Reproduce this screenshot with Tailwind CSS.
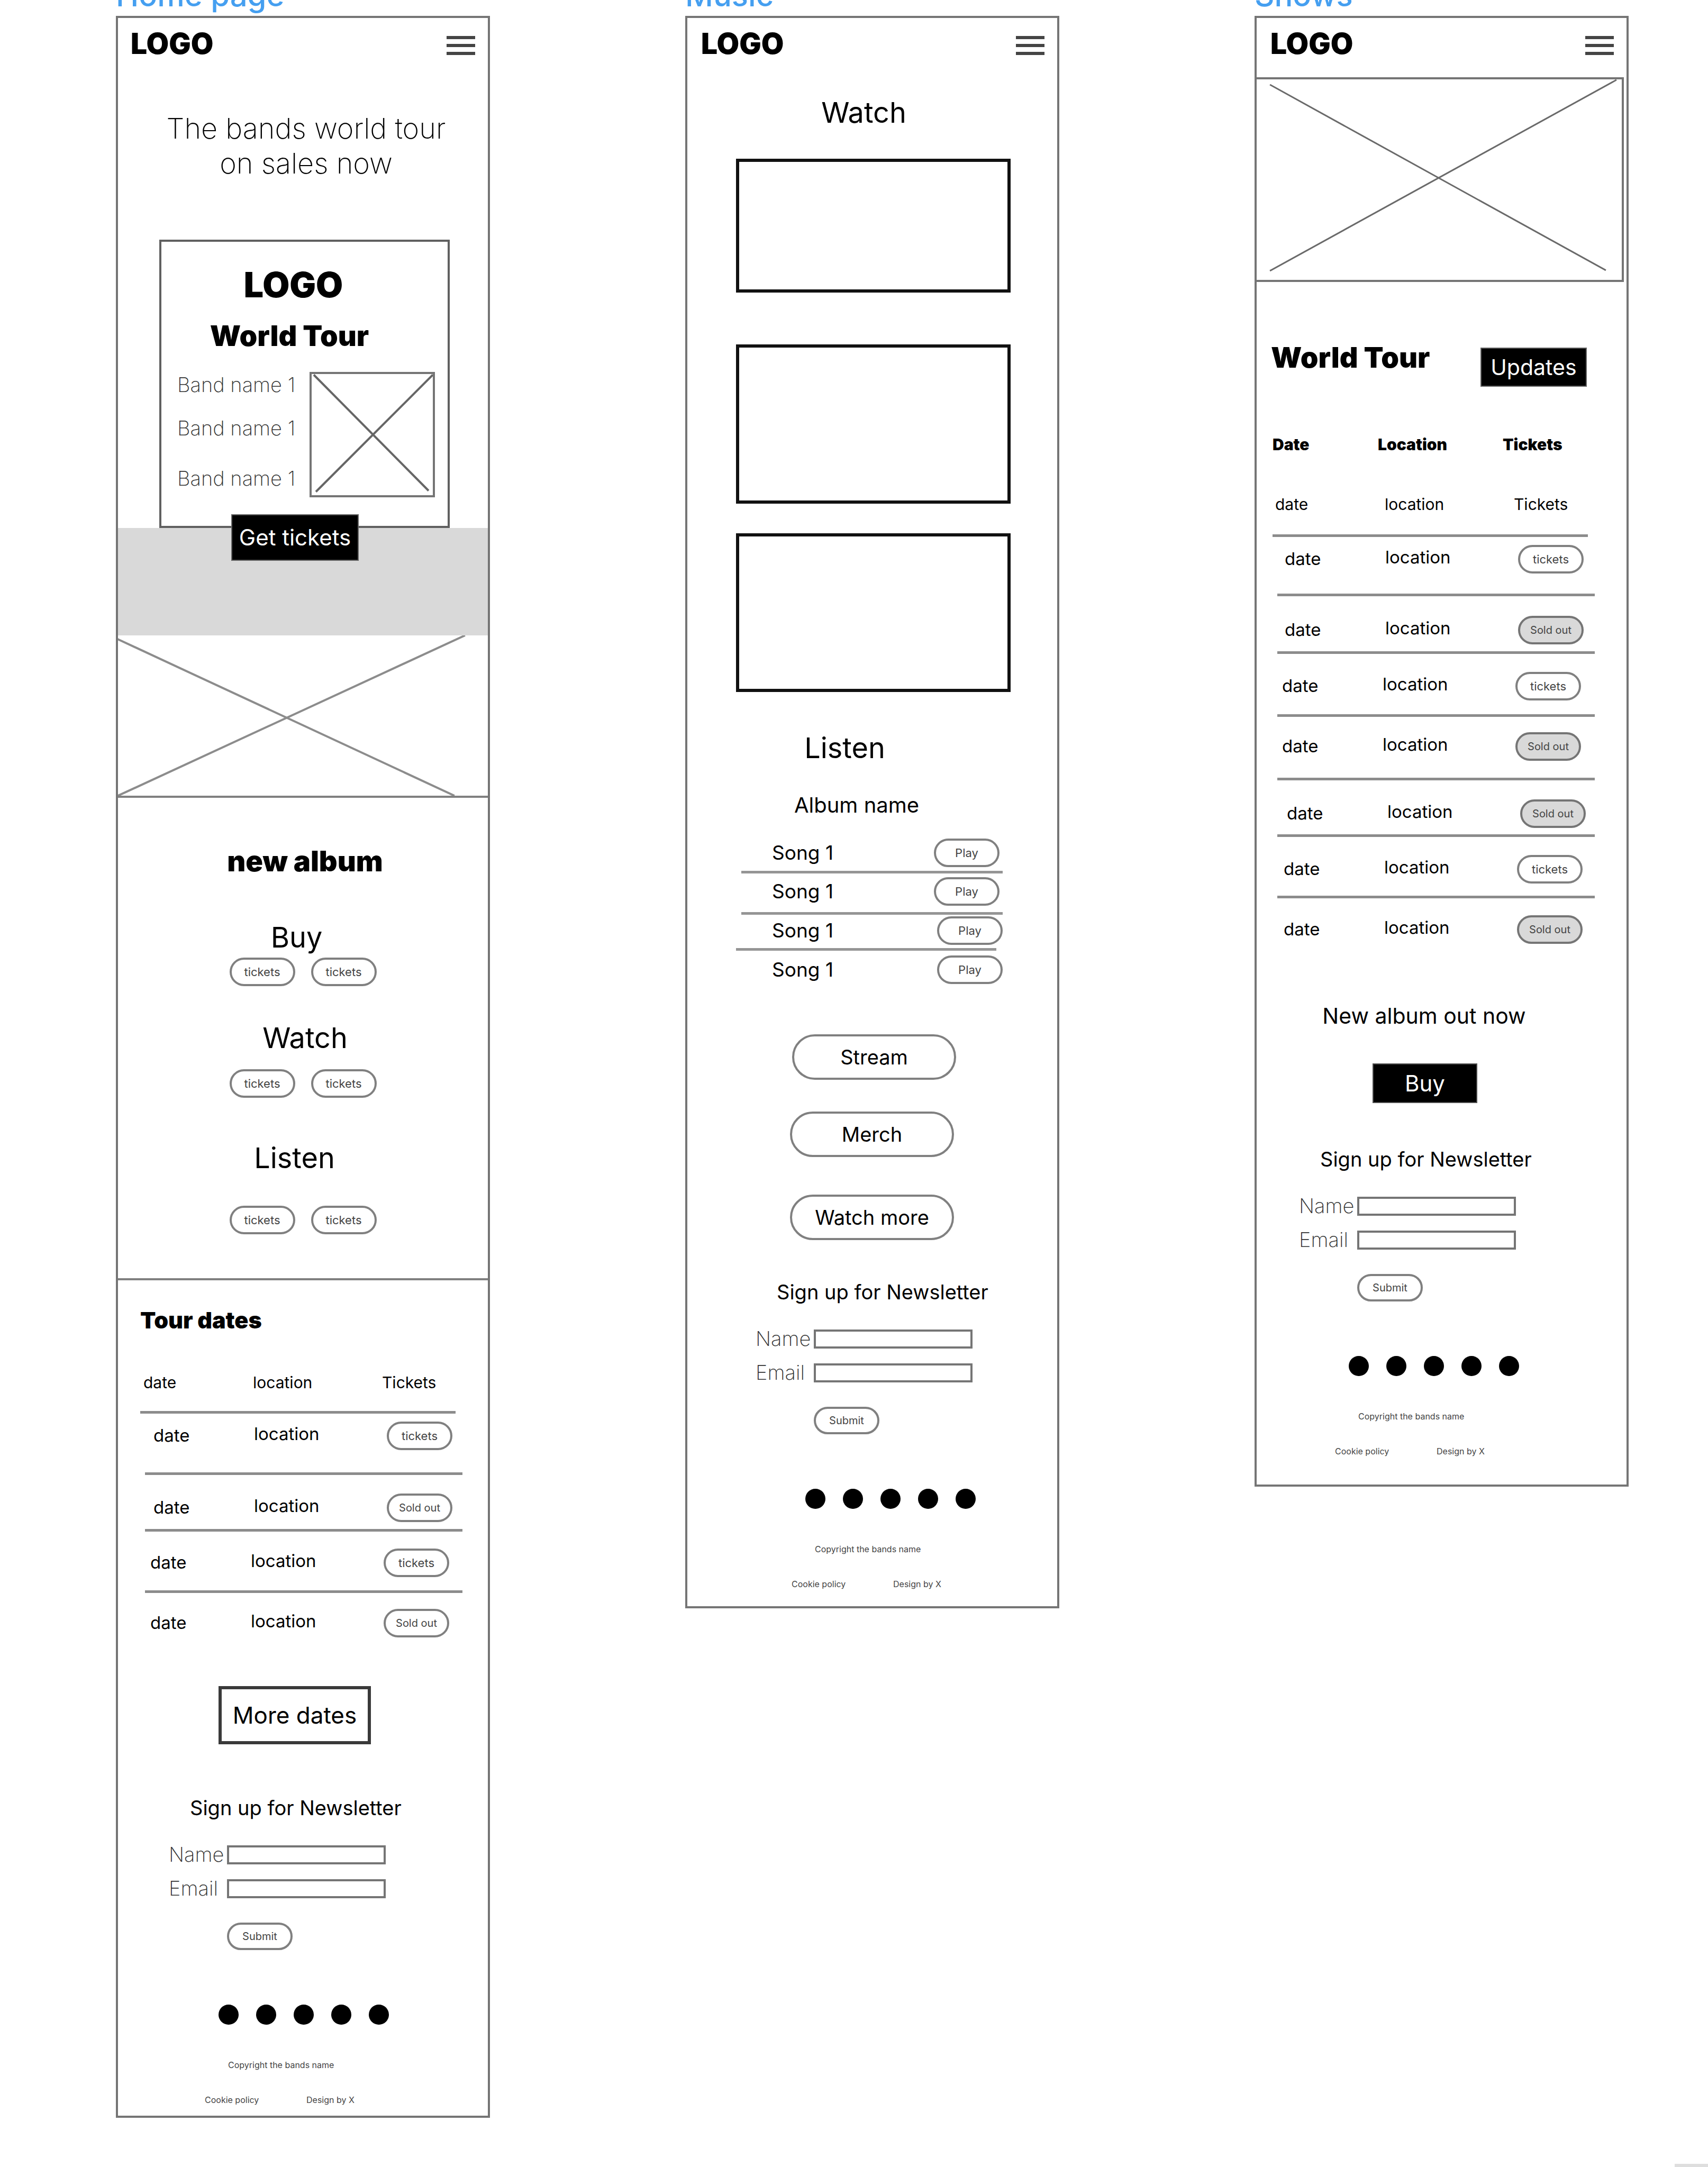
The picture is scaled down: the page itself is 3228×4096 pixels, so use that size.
<!DOCTYPE html>
<html lang="en">
<head>
<meta charset="utf-8">
<meta name="viewport" content="width=device-width, initial-scale=1">
<title>Band site wireframes</title>
<script src="https://cdn.jsdelivr.net/npm/@tailwindcss/browser@4"></script>
</head>
<body class="bg-white font-['Inter',sans-serif] text-black">
<main class="relative flex min-h-screen items-start gap-[369px] overflow-hidden pr-[150px] pl-[219px]">

  <!-- Home page -->
  <div class="-mt-[38px] min-w-0 flex-1">
    <h1 class="text-[58px] leading-[58px] font-medium text-[#459ff0]">Home page</h1>
    <article class="mt-[10px] border-4 border-[#757575] pb-[18px]">
      <header class="flex h-24 items-center justify-between pr-6 pl-6">
        <a href="#" class="text-[55px] leading-[64px] font-black">LOGO</a>
        <button type="button" aria-label="Menu" class="mt-2 flex w-[54px] flex-col gap-[9px]">
          <span class="h-[6px] w-full bg-[#444]"></span><span class="h-[6px] w-full bg-[#444]"></span><span class="h-[6px] w-full bg-[#444]"></span>
        </button>
      </header>

      <p class="mt-20 pl-3 text-center text-[54px] leading-[66px] font-extralight">The bands world tour<br>on sales now</p>

      <section class="relative z-10 mt-[111px] mr-[72px] ml-[78px] border-4 border-[#606060] bg-white pb-[54px]">
        <h2 class="mt-[41px] pr-[42px] text-center text-[66px] leading-[80px] font-black">LOGO</h2>
        <p class="mt-[25px] pr-[57px] text-center text-[54px] leading-[64px] font-black">World Tour</p>
        <div class="mt-9 flex justify-between pr-6 pl-[30px]">
          <ul class="text-[38px] leading-[48px] font-extralight text-[#333]">
            <li>Band name 1</li>
            <li class="mt-[34px]">Band name 1</li>
            <li class="mt-[47px]">Band name 1</li>
          </ul>
          <div class="h-[237px] w-[237px] border-4 border-[#757575]">
            <svg viewBox="0 0 228 227" class="block size-full" fill="none" stroke="#666" stroke-width="4"><path d="M4 1 L220 219 M228 1 L8 221"/></svg>
          </div>
        </div>
        <button type="button" class="absolute bottom-[-66px] left-[132px] h-[88px] w-[241px] border-2 border-[#606060] bg-black text-[42px] leading-[50px] text-white">Get tickets</button>
      </section>

      <div class="h-[203px] bg-[#d9d9d9]"></div>
      <svg viewBox="0 0 697 303" preserveAspectRatio="none" class="block h-[303px] w-full" fill="none" stroke="#8c8c8c" stroke-width="4"><path d="M-3 6 L634 303 M0 303 L654 0"/></svg>

      <section class="border-y-4 border-[#808080] pt-[88px] pb-[83px] text-center">
        <h2 class="pl-2 text-[54px] leading-[64px] font-black">new album</h2>
        <h3 class="mt-20 pr-6 text-[54px] leading-[64px]">Buy</h3>
        <div class="mt-[6px] flex justify-center gap-[30px]">
          <button type="button" class="h-[54px] w-[124px] rounded-full border-4 border-[#808080] text-[22px] leading-[28px] text-[#444]">tickets</button>
          <button type="button" class="h-[54px] w-[124px] rounded-full border-4 border-[#808080] text-[22px] leading-[28px] text-[#444]">tickets</button>
        </div>
        <h3 class="mt-[66px] pl-2 text-[54px] leading-[64px]">Watch</h3>
        <div class="mt-[27px] flex justify-center gap-[30px]">
          <button type="button" class="h-[54px] w-[124px] rounded-full border-4 border-[#808080] text-[22px] leading-[28px] text-[#444]">tickets</button>
          <button type="button" class="h-[54px] w-[124px] rounded-full border-4 border-[#808080] text-[22px] leading-[28px] text-[#444]">tickets</button>
        </div>
        <h3 class="mt-[82px] pr-8 text-[54px] leading-[64px]">Listen</h3>
        <div class="mt-[58px] flex justify-center gap-[30px]">
          <button type="button" class="h-[54px] w-[124px] rounded-full border-4 border-[#808080] text-[22px] leading-[28px] text-[#444]">tickets</button>
          <button type="button" class="h-[54px] w-[124px] rounded-full border-4 border-[#808080] text-[22px] leading-[28px] text-[#444]">tickets</button>
        </div>
      </section>

      <section class="pr-[48px] pl-[42px]">
        <h2 class="mt-[50px] text-[43px] leading-[50px] font-black">Tour dates</h2>
        <table class="mt-[72px] w-full table-fixed border-separate border-spacing-0 text-left text-[33px] leading-[46px]">
          <colgroup><col class="w-[9px]"><col class="w-[190px]"><col><col class="w-[161px]"><col class="w-[13px]"></colgroup>
          <thead class="text-[30px] leading-[42px]">
            <tr class="h-20">
              <th colspan="2" class="border-b-5 border-[#8c8c8c] pl-[6px] align-top font-normal">date</th>
              <th class="border-b-5 border-[#8c8c8c] pl-[14px] align-top font-normal">location</th>
              <th class="border-b-5 border-[#8c8c8c] pl-[22px] align-top font-normal">Tickets</th>
              <td></td>
            </tr>
          </thead>
          <tbody class="align-top">
            <tr class="h-[116px] [&>td]:pt-[15px] [&>td+td]:border-b-5 [&>td+td]:border-[#8c8c8c] [&>td+td]:pl-4">
              <td></td><td class="leading-[52px]">date</td><td>location</td>
              <td colspan="2"><button type="button" class="ml-[15px] block h-[54px] w-[124px] rounded-full border-4 border-[#808080] text-[22px] leading-[28px] text-[#444]">tickets</button></td>
            </tr>
            <tr class="h-[107px] [&>td]:pt-[35px] [&>td+td]:border-b-5 [&>td+td]:border-[#8c8c8c] [&>td+td]:pl-4">
              <td></td><td class="leading-[52px]">date</td><td>location</td>
              <td colspan="2"><button type="button" class="ml-[15px] block h-[54px] w-[124px] rounded-full border-4 border-[#808080] text-[20px] leading-[28px] text-[#444]">Sold out</button></td>
            </tr>
            <tr class="h-[116px] [&>td]:pt-8 [&>td+td]:border-b-5 [&>td+td]:border-[#8c8c8c] [&>td+td]:pl-[10px]">
              <td></td><td class="leading-[52px]">date</td><td>location</td>
              <td colspan="2"><button type="button" class="ml-[15px] block h-[54px] w-[124px] rounded-full border-4 border-[#808080] text-[22px] leading-[28px] text-[#444]">tickets</button></td>
            </tr>
            <tr class="h-[84px] [&>td]:pt-[30px] [&>td+td]:pl-[10px]">
              <td></td><td class="leading-[52px]">date</td><td>location</td>
              <td colspan="2"><button type="button" class="ml-[15px] block h-[54px] w-[124px] rounded-full border-4 border-[#808080] text-[20px] leading-[28px] text-[#444]">Sold out</button></td>
            </tr>
          </tbody>
        </table>
      </section>
      <button type="button" class="mt-[92px] ml-[190px] block h-[110px] w-[288px] border-6 border-[#3a3a3a] text-[44px] leading-[50px]">More dates</button>

      <form class="mt-[95px] ml-24">
        <h2 class="pl-10 text-[38px] leading-[50px]">Sign up for Newsletter</h2>
        <div class="mt-[45px] flex items-center">
          <label for="home-name" class="w-[110px] text-[38px] leading-[37px] font-extralight text-[#333]">Name</label>
          <input id="home-name" type="text" class="h-[36px] w-[300px] border-4 border-[#757575]">
        </div>
        <div class="mt-[27px] flex items-center">
          <label for="home-email" class="w-[110px] text-[38px] leading-[37px] font-extralight text-[#333]">Email</label>
          <input id="home-email" type="email" class="h-[36px] w-[300px] border-4 border-[#757575]">
        </div>
        <button type="submit" class="mt-[46px] ml-[110px] block h-[52px] w-[124px] rounded-full border-4 border-[#808080] text-[20px] leading-[28px] text-[#444]">Submit</button>
      </form>
      <footer class="ml-24 text-[16px] leading-[24px] text-[#444]">
        <nav class="mt-[103px] ml-[94px] flex w-[322px] justify-between">
          <a href="#" aria-label="Social link 1" class="size-[38px] rounded-full bg-black"></a>
          <a href="#" aria-label="Social link 2" class="size-[38px] rounded-full bg-black"></a>
          <a href="#" aria-label="Social link 3" class="size-[38px] rounded-full bg-black"></a>
          <a href="#" aria-label="Social link 4" class="size-[38px] rounded-full bg-black"></a>
          <a href="#" aria-label="Social link 5" class="size-[38px] rounded-full bg-black"></a>
        </nav>
        <p class="mt-[64px] pl-[112px]">Copyright the bands name</p>
        <div class="mt-[42px] flex pl-[68px]"><a href="#" class="w-[192px]">Cookie policy</a><span>Design by X</span></div>
      </footer>
    </article>
  </div>

  <!-- Music -->
  <div class="-mt-[38px] min-w-0 flex-1">
    <h1 class="text-[58px] leading-[58px] font-medium text-[#459ff0]">Music</h1>
    <article class="mt-[10px] border-4 border-[#757575] pb-[30px]">
      <header class="flex h-24 items-center justify-between pr-6 pl-[26px]">
        <a href="#" class="text-[55px] leading-[64px] font-black">LOGO</a>
        <button type="button" aria-label="Menu" class="mt-2 flex w-[54px] flex-col gap-[9px]">
          <span class="h-[6px] w-full bg-[#444]"></span><span class="h-[6px] w-full bg-[#444]"></span><span class="h-[6px] w-full bg-[#444]"></span>
        </button>
      </header>

      <h2 class="mt-[51px] pr-8 text-center text-[54px] leading-[64px]">Watch</h2>
      <div class="mt-[55px] mr-[88px] ml-[92px] h-[253px] border-6 border-[#111]"></div>
      <div class="mt-[98px] mr-[88px] ml-[92px] h-[301px] border-6 border-[#111]"></div>
      <div class="mt-[56px] mr-[88px] ml-[92px] h-[300px] border-6 border-[#111]"></div>

      <h2 class="mt-[74px] pr-[104px] text-center text-[54px] leading-[64px]">Listen</h2>
      <h3 class="mt-[51px] pr-[59px] text-center text-[40px] leading-[50px]">Album name</h3>
      <ul class="mt-[31px] mr-[103px] ml-[102px] text-[37px] leading-[46px]">
        <li class="flex h-[73px] items-center justify-between border-b-5 border-[#959595] pr-[6px] pl-[58px]">
          Song 1<button type="button" class="h-[54px] w-[124px] rounded-full border-4 border-[#808080] text-[22px] leading-[28px] text-[#444]">Play</button>
        </li>
        <li class="flex h-[78px] items-center justify-between border-b-5 border-[#959595] pr-[6px] pb-[6px] pl-[58px]">
          Song 1<button type="button" class="h-[54px] w-[124px] rounded-full border-4 border-[#808080] text-[22px] leading-[28px] text-[#444]">Play</button>
        </li>
        <li class="mr-3 -ml-[10px] flex h-[68px] items-center justify-between border-b-5 border-[#959595] pb-1 pl-[68px]">
          Song 1<button type="button" class="-mr-3 h-[54px] w-[124px] rounded-full border-4 border-[#808080] text-[22px] leading-[28px] text-[#444]">Play</button>
        </li>
        <li class="flex h-[72px] items-center justify-between pl-[58px]">
          Song 1<button type="button" class="h-[54px] w-[124px] rounded-full border-4 border-[#808080] text-[22px] leading-[28px] text-[#444]">Play</button>
        </li>
      </ul>

      <a href="#" class="mt-[86px] ml-[198px] flex h-[86px] w-[310px] items-center justify-center rounded-full border-4 border-[#808080] text-[38px] leading-[46px]">Stream</a>
      <a href="#" class="mt-[60px] ml-[194px] flex h-[86px] w-[310px] items-center justify-center rounded-full border-4 border-[#808080] text-[38px] leading-[46px]">Merch</a>
      <a href="#" class="mt-[71px] ml-[194px] flex h-[86px] w-[310px] items-center justify-center rounded-full border-4 border-[#808080] text-[38px] leading-[46px]">Watch more</a>

      <form class="mt-[73px] ml-[129px]">
        <h2 class="pl-10 text-[38px] leading-[50px]">Sign up for Newsletter</h2>
        <div class="mt-[45px] flex items-center">
          <label for="music-name" class="w-[110px] text-[38px] leading-[37px] font-extralight text-[#333]">Name</label>
          <input id="music-name" type="text" class="h-[36px] w-[300px] border-4 border-[#757575]">
        </div>
        <div class="mt-[27px] flex items-center">
          <label for="music-email" class="w-[110px] text-[38px] leading-[37px] font-extralight text-[#333]">Email</label>
          <input id="music-email" type="email" class="h-[36px] w-[300px] border-4 border-[#757575]">
        </div>
        <button type="submit" class="mt-[46px] ml-[110px] block h-[52px] w-[124px] rounded-full border-4 border-[#808080] text-[20px] leading-[28px] text-[#444]">Submit</button>
      </form>
      <footer class="ml-[129px] text-[16px] leading-[24px] text-[#444]">
        <nav class="mt-[103px] ml-[94px] flex w-[322px] justify-between">
          <a href="#" aria-label="Social link 1" class="size-[38px] rounded-full bg-black"></a>
          <a href="#" aria-label="Social link 2" class="size-[38px] rounded-full bg-black"></a>
          <a href="#" aria-label="Social link 3" class="size-[38px] rounded-full bg-black"></a>
          <a href="#" aria-label="Social link 4" class="size-[38px] rounded-full bg-black"></a>
          <a href="#" aria-label="Social link 5" class="size-[38px] rounded-full bg-black"></a>
        </nav>
        <p class="mt-[64px] pl-[112px]">Copyright the bands name</p>
        <div class="mt-[42px] flex pl-[68px]"><a href="#" class="w-[192px]">Cookie policy</a><span>Design by X</span></div>
      </footer>
    </article>
  </div>

  <!-- Shows -->
  <div class="-mt-[38px] min-w-0 flex-1">
    <h1 class="text-[58px] leading-[58px] font-medium text-[#459ff0]">Shows</h1>
    <article class="mt-[10px] border-4 border-[#757575] pb-[51px]">
      <header class="flex h-24 items-center justify-between pr-6 pl-[26px]">
        <a href="#" class="text-[55px] leading-[64px] font-black">LOGO</a>
        <button type="button" aria-label="Menu" class="mt-2 flex w-[54px] flex-col gap-[9px]">
          <span class="h-[6px] w-full bg-[#444]"></span><span class="h-[6px] w-full bg-[#444]"></span><span class="h-[6px] w-full bg-[#444]"></span>
        </button>
      </header>

      <div class="mt-4 mr-[5px] h-[387px] border-y-4 border-r-4 border-[#757575]">
        <svg viewBox="0 0 688 377" preserveAspectRatio="none" class="block size-full" fill="none" stroke="#6a6a6a" stroke-width="3"><path d="M25 10 L658 359 M25 360 L678 1"/></svg>
      </div>

      <div class="mt-[111px] flex items-start justify-between pr-[75px] pl-[27px]">
        <h2 class="text-[54px] leading-[64px] font-black">World Tour</h2>
        <button type="button" class="mt-[13px] h-[74px] w-[201px] border-2 border-[#606060] bg-black text-[41px] leading-[50px] text-white">Updates</button>
      </div>

      <div class="pr-[60px] pl-[30px]">
        <table class="mt-[89px] w-full table-fixed border-separate border-spacing-0 text-left text-[33px] leading-[46px]">
          <colgroup><col class="w-[9px]"><col class="w-[190px]"><col><col class="w-[161px]"><col class="w-[13px]"></colgroup>
          <thead class="align-top">
            <tr class="h-[112px] text-[30px] leading-[40px]">
              <th colspan="2" class="font-black">Date</th><th class="font-black">Location</th><th class="font-black">Tickets</th><td></td>
            </tr>
            <tr class="h-[83px] text-[30px] leading-[42px]">
              <th colspan="2" class="border-b-5 border-[#8c8c8c] pl-[5px] font-normal">date</th>
              <th class="border-b-5 border-[#8c8c8c] pl-[13px] font-normal">location</th>
              <th class="border-b-5 border-[#8c8c8c] pl-[21px] font-normal">Tickets</th>
              <td></td>
            </tr>
          </thead>
          <tbody class="align-top">
            <tr class="h-[112px] [&>td]:pt-[15px] [&>td+td]:border-b-5 [&>td+td]:border-[#8c8c8c] [&>td+td]:pl-[14px]">
              <td></td><td class="leading-[52px]">date</td><td>location</td>
              <td colspan="2"><button type="button" class="ml-[15px] block h-[54px] w-[124px] rounded-full border-4 border-[#808080] text-[22px] leading-[28px] text-[#444]">tickets</button></td>
            </tr>
            <tr class="h-[109px] [&>td]:pt-[37px] [&>td+td]:border-b-5 [&>td+td]:border-[#8c8c8c] [&>td+td]:pl-[14px]">
              <td></td><td class="leading-[52px]">date</td><td>location</td>
              <td colspan="2"><button type="button" class="ml-[15px] block h-[54px] w-[124px] rounded-full border-4 border-[#757575] bg-[#d9d9d9] text-[20px] leading-[28px] text-[#444]">Sold out</button></td>
            </tr>
            <tr class="h-[119px] [&>td]:pt-[34px] [&>td+td]:border-b-5 [&>td+td]:border-[#8c8c8c] [&>td+td]:pl-[9px]">
              <td></td><td class="leading-[52px]">date</td><td>location</td>
              <td colspan="2"><button type="button" class="ml-[15px] block h-[54px] w-[124px] rounded-full border-4 border-[#808080] text-[22px] leading-[28px] text-[#444]">tickets</button></td>
            </tr>
            <tr class="h-[120px] [&>td]:pt-[29px] [&>td+td]:border-b-5 [&>td+td]:border-[#8c8c8c] [&>td+td]:pl-[9px]">
              <td></td><td class="leading-[52px]">date</td><td>location</td>
              <td colspan="2"><button type="button" class="ml-[15px] block h-[54px] w-[124px] rounded-full border-4 border-[#757575] bg-[#d9d9d9] text-[20px] leading-[28px] text-[#444]">Sold out</button></td>
            </tr>
            <tr class="h-[107px] [&>td]:pt-[36px] [&>td+td]:border-b-5 [&>td+td]:border-[#8c8c8c] [&>td+td]:pl-[18px]">
              <td></td><td class="leading-[52px]">date</td><td>location</td>
              <td colspan="2"><button type="button" class="ml-[15px] block h-[54px] w-[124px] rounded-full border-4 border-[#757575] bg-[#d9d9d9] text-[20px] leading-[28px] text-[#444]">Sold out</button></td>
            </tr>
            <tr class="h-[116px] [&>td]:pt-[34px] [&>td+td]:border-b-5 [&>td+td]:border-[#8c8c8c] [&>td+td]:pl-3">
              <td></td><td class="leading-[52px]">date</td><td>location</td>
              <td colspan="2"><button type="button" class="ml-[15px] block h-[54px] w-[124px] rounded-full border-4 border-[#808080] text-[22px] leading-[28px] text-[#444]">tickets</button></td>
            </tr>
            <tr class="h-[86px] [&>td]:pt-8 [&>td+td]:pl-3">
              <td></td><td class="leading-[52px]">date</td><td>location</td>
              <td colspan="2"><button type="button" class="ml-[15px] block h-[54px] w-[124px] rounded-full border-4 border-[#757575] bg-[#d9d9d9] text-[20px] leading-[28px] text-[#444]">Sold out</button></td>
            </tr>
          </tbody>
        </table>
      </div>

      <h2 class="mt-[111px] pr-[66px] text-center text-[41px] leading-[50px]">New album out now</h2>
      <button type="button" class="mt-[65px] ml-[219px] block h-[75px] w-[198px] border-2 border-[#505050] bg-black text-[42px] leading-[50px] text-white">Buy</button>

      <form class="mt-[81px] ml-20">
        <h2 class="pl-10 text-[38px] leading-[50px]">Sign up for Newsletter</h2>
        <div class="mt-[45px] flex items-center">
          <label for="shows-name" class="w-[110px] text-[38px] leading-[37px] font-extralight text-[#333]">Name</label>
          <input id="shows-name" type="text" class="h-[36px] w-[300px] border-4 border-[#757575]">
        </div>
        <div class="mt-[27px] flex items-center">
          <label for="shows-email" class="w-[110px] text-[38px] leading-[37px] font-extralight text-[#333]">Email</label>
          <input id="shows-email" type="email" class="h-[36px] w-[300px] border-4 border-[#757575]">
        </div>
        <button type="submit" class="mt-[46px] ml-[110px] block h-[52px] w-[124px] rounded-full border-4 border-[#808080] text-[20px] leading-[28px] text-[#444]">Submit</button>
      </form>
      <footer class="ml-20 text-[16px] leading-[24px] text-[#444]">
        <nav class="mt-[103px] ml-[94px] flex w-[322px] justify-between">
          <a href="#" aria-label="Social link 1" class="size-[38px] rounded-full bg-black"></a>
          <a href="#" aria-label="Social link 2" class="size-[38px] rounded-full bg-black"></a>
          <a href="#" aria-label="Social link 3" class="size-[38px] rounded-full bg-black"></a>
          <a href="#" aria-label="Social link 4" class="size-[38px] rounded-full bg-black"></a>
          <a href="#" aria-label="Social link 5" class="size-[38px] rounded-full bg-black"></a>
        </nav>
        <p class="mt-[64px] pl-[112px]">Copyright the bands name</p>
        <div class="mt-[42px] flex pl-[68px]"><a href="#" class="w-[192px]">Cookie policy</a><span>Design by X</span></div>
      </footer>
    </article>
  </div>

  <!-- Edge of the canvas scroll bar -->
  <div class="absolute right-0 bottom-0 h-[6px] w-[63px] bg-[#dedede]"></div>
</main>
</body>
</html>
